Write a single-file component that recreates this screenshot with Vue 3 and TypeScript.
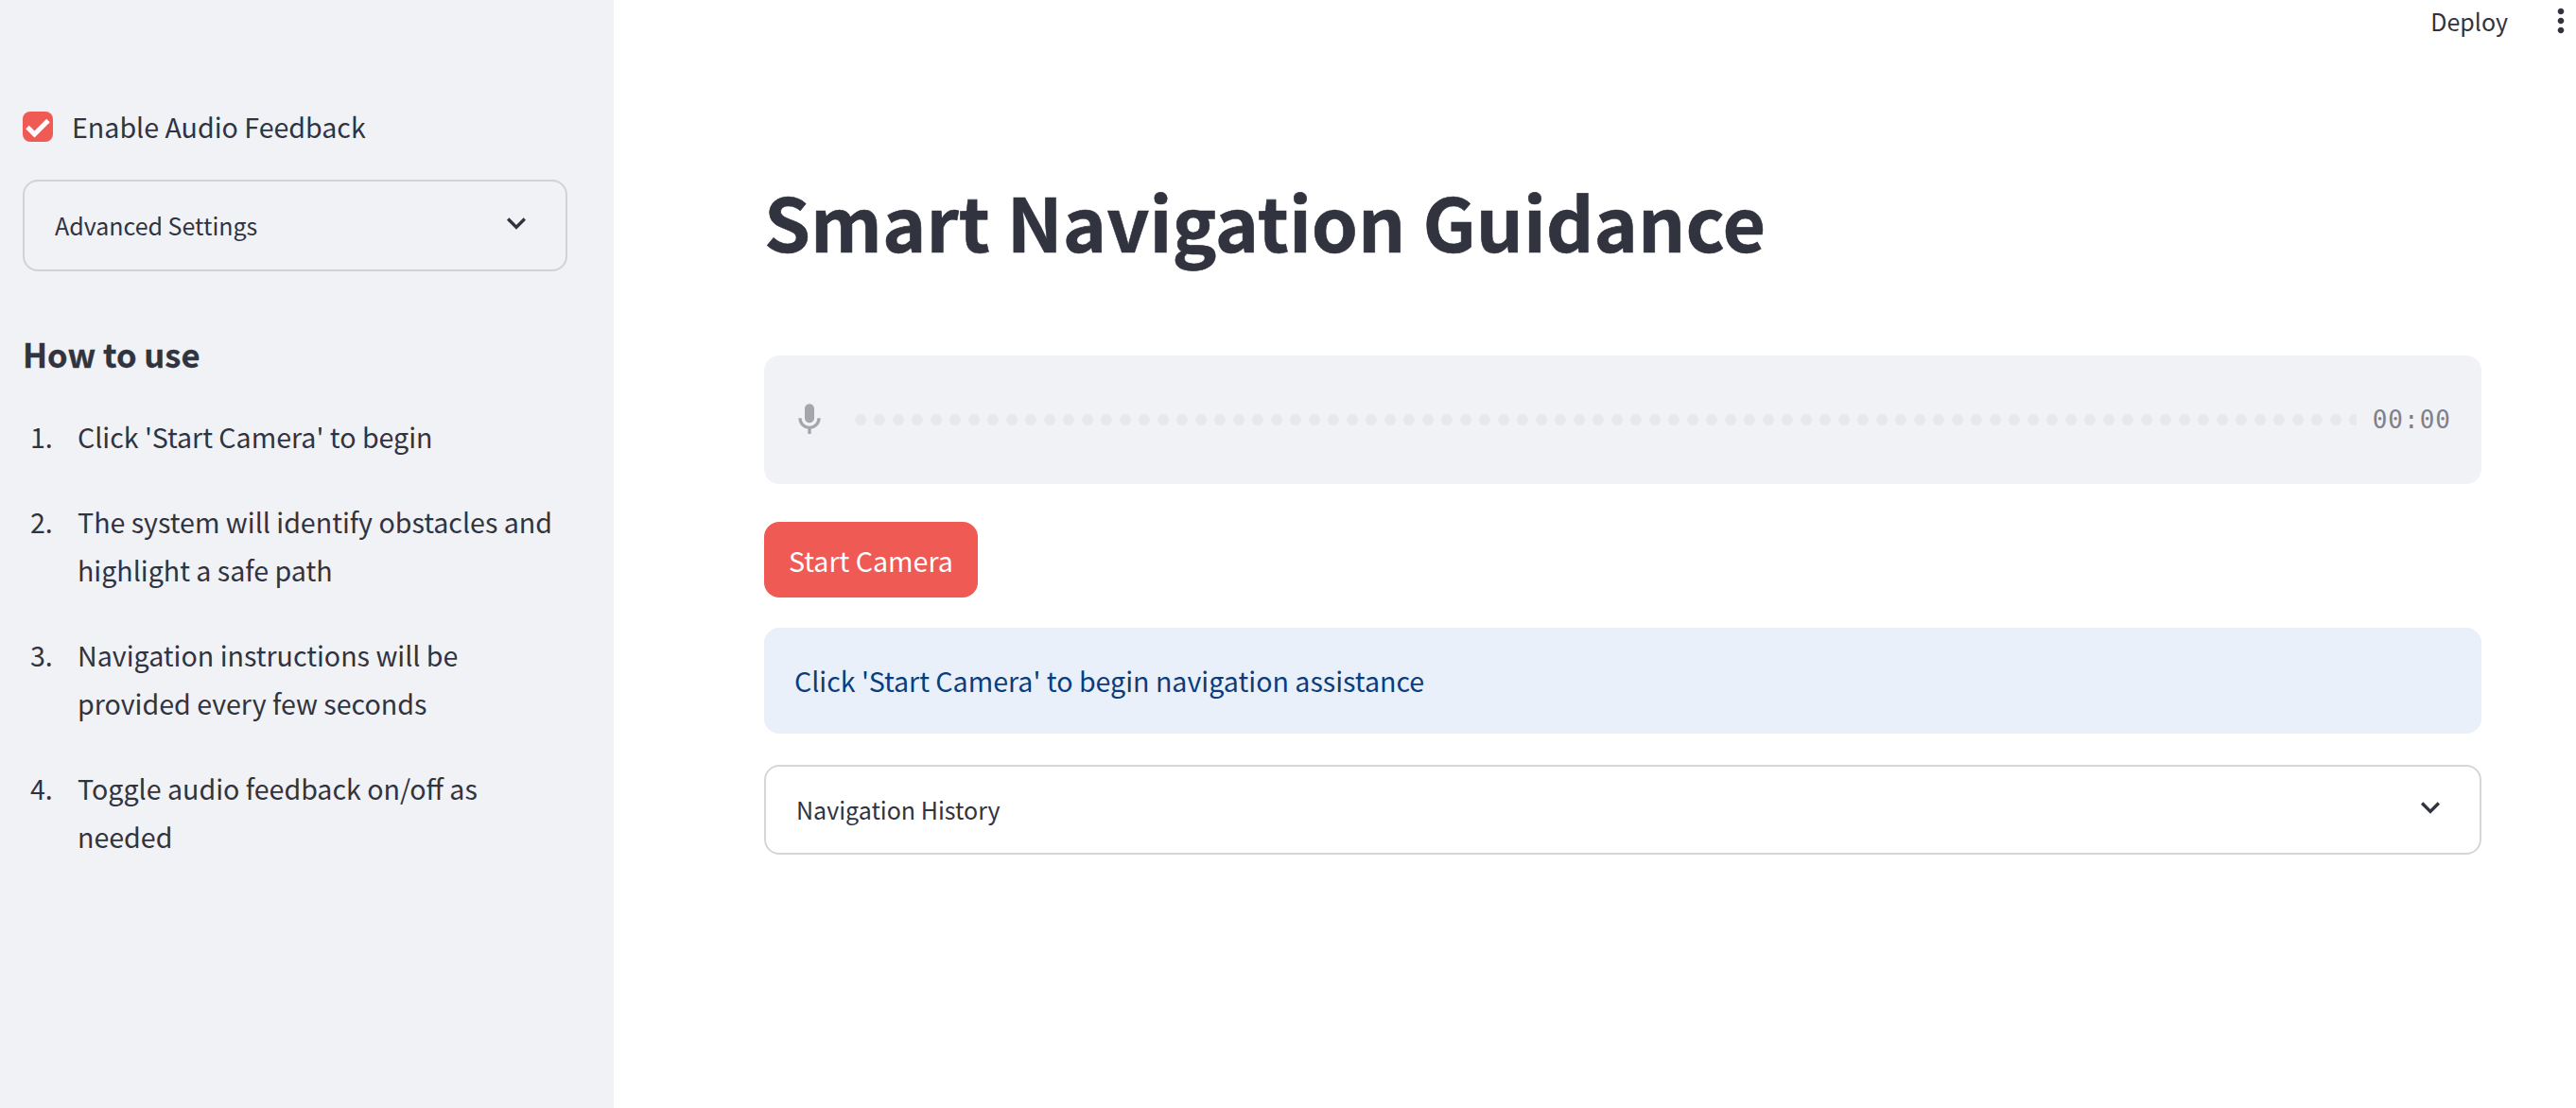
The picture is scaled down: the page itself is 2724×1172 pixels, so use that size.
<script setup lang="ts">
const dots: number[] = Array.from({ length: 80 }, (_, i) => i)
const steps: { n: number; text: string }[] = [
  { n: 1, text: "Click 'Start Camera' to begin" },
  { n: 2, text: 'The system will identify obstacles and highlight a safe path' },
  { n: 3, text: 'Navigation instructions will be provided every few seconds' },
  { n: 4, text: 'Toggle audio feedback on/off as needed' },
]
const chevron = 'M16.59 8.59L12 13.17 7.41 8.59 6 10l6 6 6-6z'
</script>

<template>
  <div class="app">
    <aside class="sidebar">
      <label class="check">
        <span class="box">
          <svg viewBox="0 0 32 32" width="32" height="32"><path d="M5 16.5l7.5 7.5L27 9.5" fill="none" stroke="#fff" stroke-width="5" /></svg>
        </span>
        <span>Enable Audio Feedback</span>
      </label>
      <div class="expander side-exp">
        <span>Advanced Settings</span>
        <svg class="chev" viewBox="0 0 24 24" width="40" height="40"><path :d="chevron" /></svg>
      </div>
      <h3>How to use</h3>
      <ol>
        <li v-for="s in steps" :key="s.n">
          <span class="num">{{ s.n }}.</span>
          <span class="txt">{{ s.text }}</span>
        </li>
      </ol>
    </aside>
    <div class="main">
      <header class="top">
        <span class="deploy">Deploy</span>
        <svg class="more" viewBox="2.4 0 19.2 24" width="32" height="40"><path d="M12 8c1.1 0 2-.9 2-2s-.9-2-2-2-2 .9-2 2 .9 2 2 2zm0 2c-1.1 0-2 .9-2 2s.9 2 2 2 2-.9 2-2-.9-2-2-2zm0 6c-1.1 0-2 .9-2 2s.9 2 2 2 2-.9 2-2-.9-2-2-2z" /></svg>
      </header>
      <section class="content">
        <h1>Smart Navigation Guidance</h1>
        <div class="recorder">
          <svg class="mic" viewBox="0 0 24 24" width="40" height="40"><path d="M12 14c1.66 0 3-1.34 3-3V5c0-1.66-1.34-3-3-3S9 3.34 9 5v6c0 1.66 1.34 3 3 3zM17 11c0 2.76-2.24 5-5 5s-5-2.24-5-5H5c0 3.53 2.61 6.43 6 6.92V21h2v-3.08c3.39-.49 6-3.39 6-6.92h-2z" /></svg>
          <div class="dots"><i v-for="d in dots" :key="d"></i></div>
          <span class="time">00:00</span>
        </div>
        <button class="start" type="button">Start Camera</button>
        <div class="info">Click 'Start Camera' to begin navigation assistance</div>
        <div class="expander main-exp">
          <span>Navigation History</span>
          <svg class="chev" viewBox="0 0 24 24" width="40" height="40"><path :d="chevron" /></svg>
        </div>
      </section>
    </div>
  </div>
</template>

<style>
html, body { margin: 0; background: #fff; }
</style>

<style scoped>
.app {
  display: flex;
  width: 2724px;
  height: 1172px;
  overflow: hidden;
  font-family: "Noto Sans CJK SC", "Noto Sans", sans-serif;
  font-size: 28.6px;
  line-height: 51px;
  color: #31333f;
}
.sidebar {
  width: 649px;
  flex: none;
  box-sizing: border-box;
  background: #f0f2f6;
  padding: 108px 49px 0 24px;
}
.check { display: flex; align-items: center; gap: 20px; height: 51px; }
.box { width: 32px; height: 32px; border-radius: 8px; background: #f05a54; display: block; }
.box svg { display: block; }
.expander {
  box-sizing: border-box;
  display: flex;
  align-items: center;
  justify-content: space-between;
  border: 2px solid #d0d2d6;
  border-radius: 16px;
  font-size: 25px;
  line-height: 45px;
}
.side-exp { height: 97px; margin-top: 31px; padding: 0 32px; }
.main-exp { height: 95px; margin-top: 33px; padding: 0 32px 0 32px; border-color: #d6d6d9; }
.chev { display: block; fill: #31333f; margin-top: -5px; }
h3 { margin: 57px 0 0; font-size: 34.5px; line-height: 60px; font-weight: 700; -webkit-text-stroke: 0.3px #31333f; }
ol { list-style: none; margin: 0; padding: 0; }
li { display: flex; margin-top: 39px; }
li:first-child { margin-top: 32px; }
.num { width: 58px; flex: none; padding-left: 8px; box-sizing: border-box; }
.main { flex: 1; min-width: 0; display: flex; flex-direction: column; }
.top { height: 44px; display: flex; align-items: center; justify-content: flex-end; font-size: 25px; }
.deploy { margin-right: 40px; }
.more { display: block; fill: #31333f; }
.content { padding: 0 100px 0 159px; }
h1 { margin: 131px 0 0; font-size: 78.7px; line-height: 116px; font-weight: 700; letter-spacing: 0; -webkit-text-stroke: 0.6px #31333f; }
.recorder {
  display: flex;
  align-items: center;
  height: 136px;
  margin-top: 85px;
  padding: 0 32px 0 28px;
  background: #f0f2f6;
  border-radius: 16px;
}
.mic { display: block; fill: #a4a6ab; flex: none; }
.dots { flex: 1; min-width: 0; display: flex; gap: 8px; overflow: hidden; margin: 0 17px 0 28px; }
.dots i { width: 12px; height: 12px; flex: none; border-radius: 50%; background: #e6e8ec; }
.time { font-family: "DejaVu Sans Mono", monospace; font-size: 26px; letter-spacing: 1px; color: #7f8088; }
.start {
  display: block;
  height: 80px;
  margin: 40px 0 0;
  padding: 0 26px;
  border: 0;
  border-radius: 16px;
  background: #f05a54;
  color: #fff;
  font: inherit;
}
.info {
  box-sizing: border-box;
  height: 112px;
  margin-top: 32px;
  padding: 30px 32px;
  background: #e9f0fa;
  border-radius: 16px;
  color: #0a3d7c;
}
</style>
